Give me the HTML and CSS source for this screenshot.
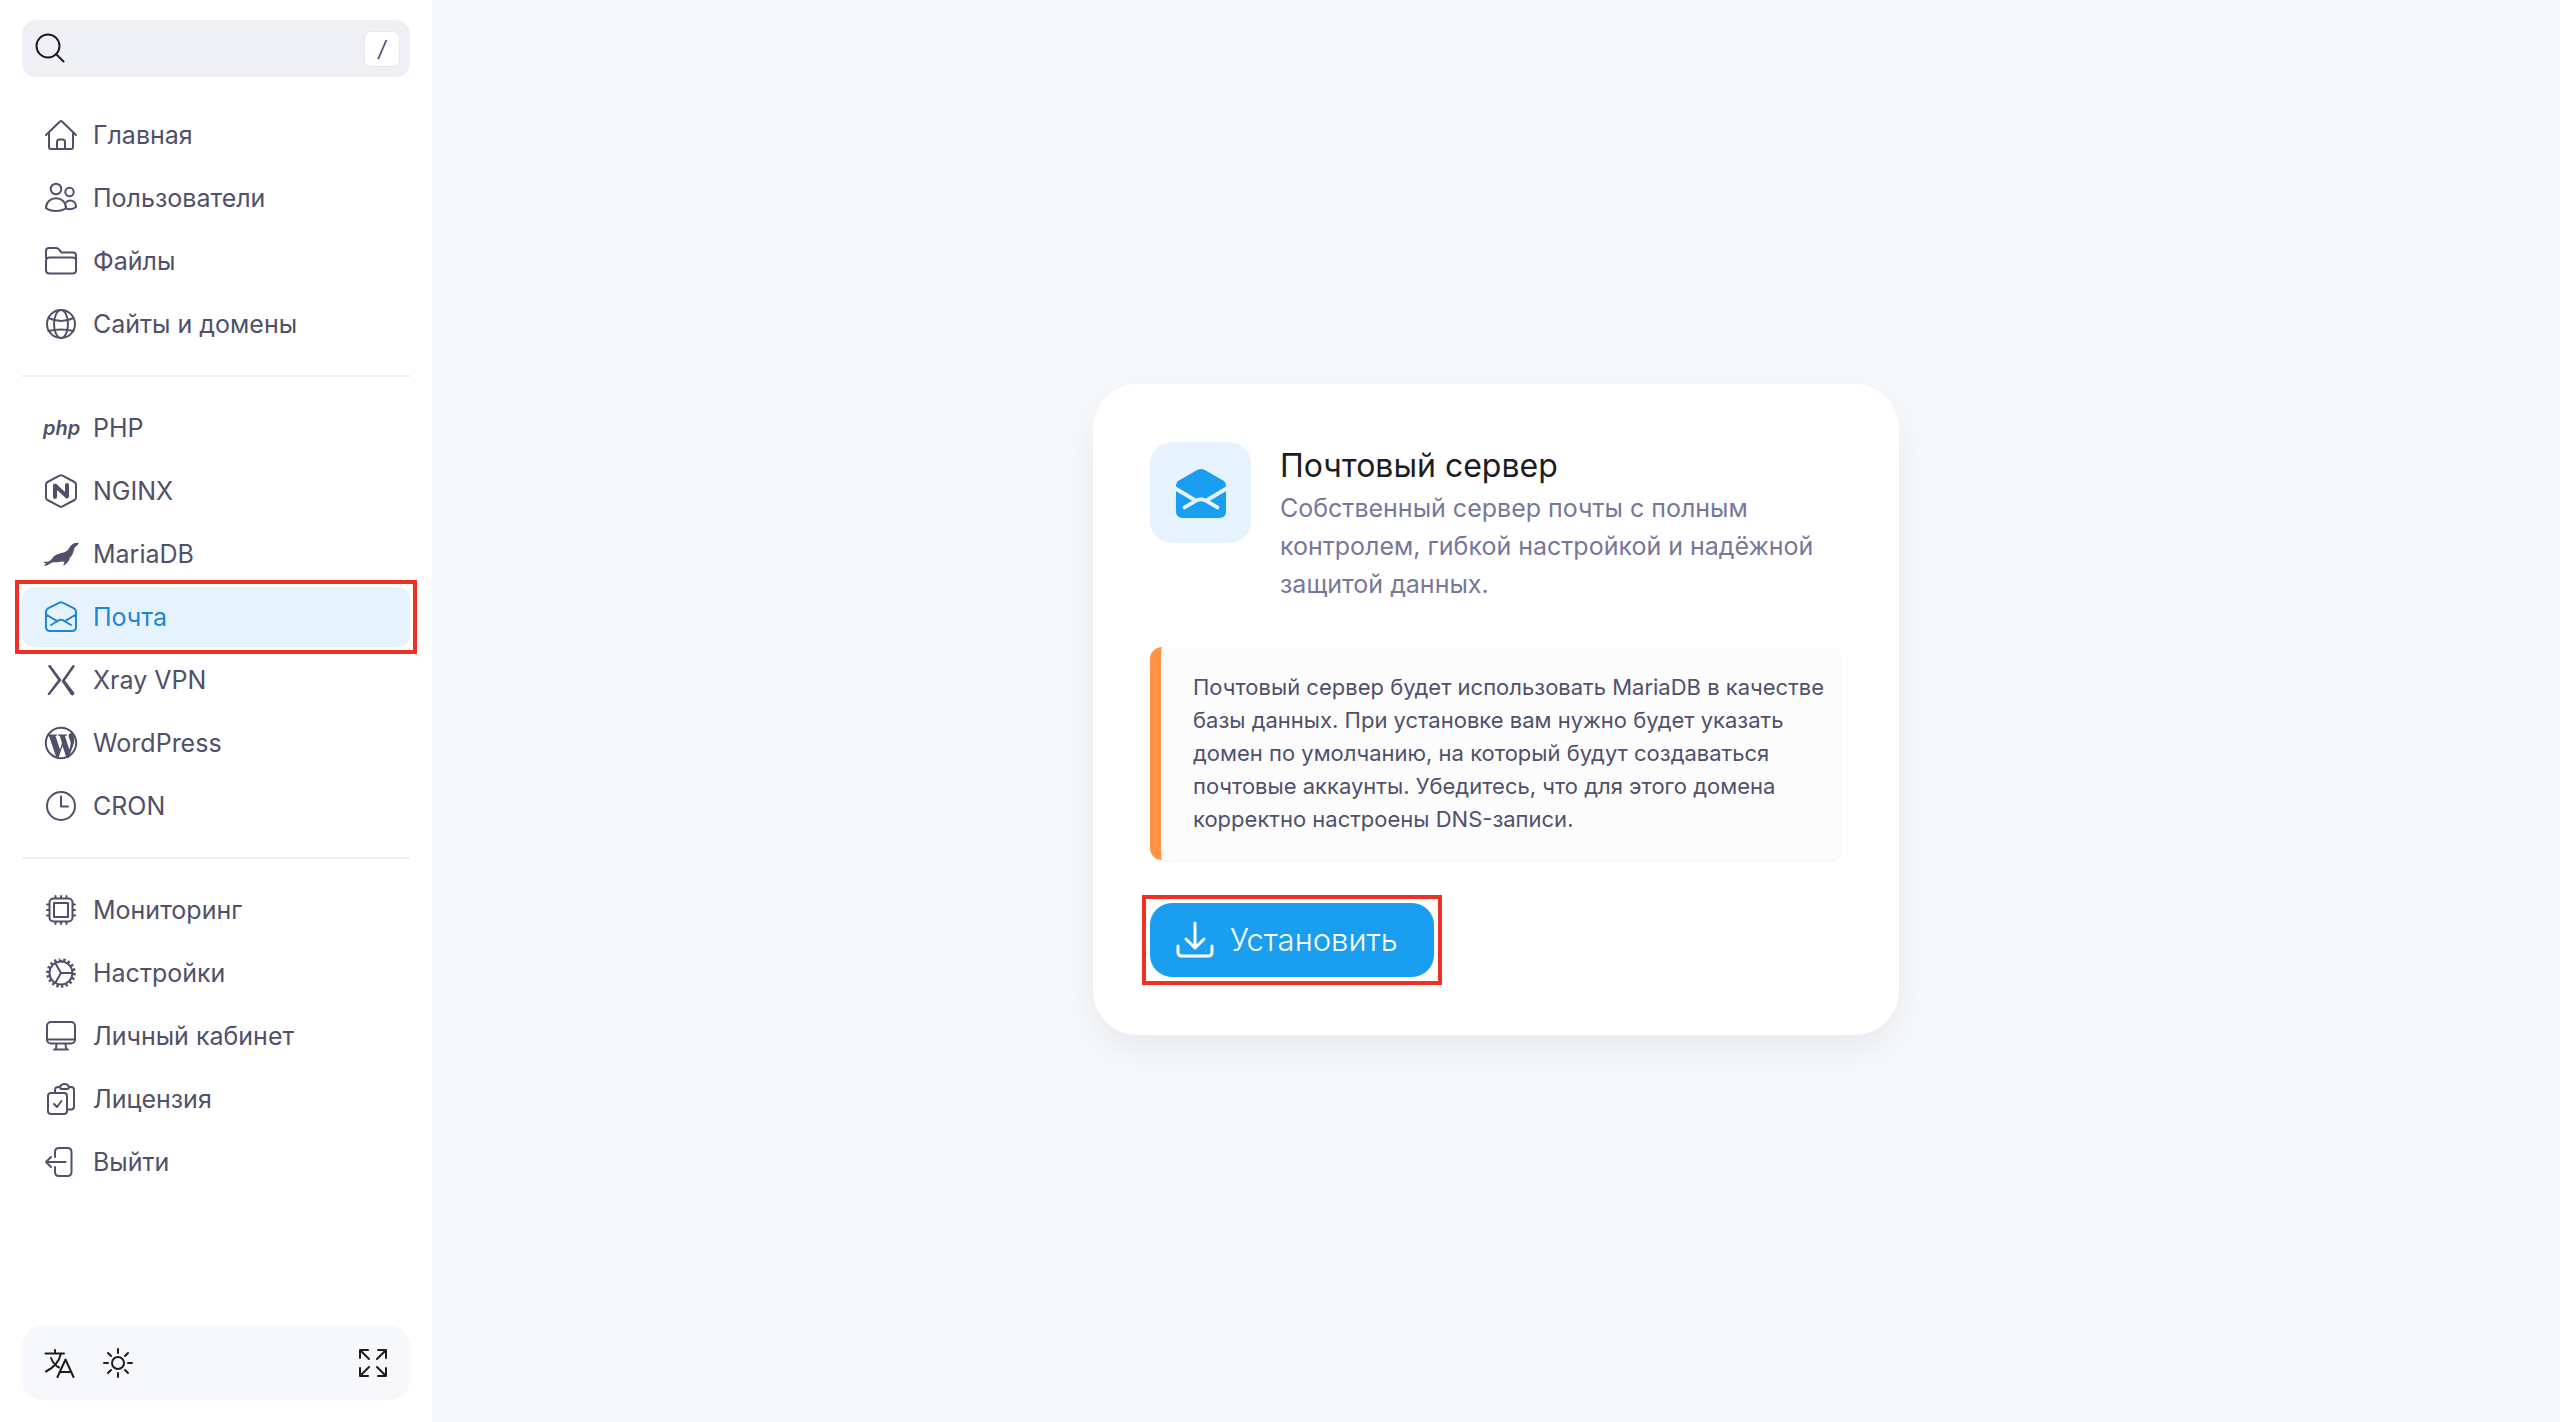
FILE: index.html
```html
<!DOCTYPE html>
<html lang="ru">

    <head>
        <meta charset="utf-8">
        <meta name="viewport" content="width=device-width, initial-scale=1">
        <title>Почтовый сервер</title>
        <link rel="stylesheet" href="styles.css">
    </head>

    <body>

        <aside class="sidebar">

            <label class="search">
                <svg class="search-icon" viewBox="0 0 32 32"><circle cx="14" cy="13" r="11.500"/><path d="M22 21l7.500 7.500"/></svg>
                <input type="search" aria-label="Поиск">
                <kbd>/</kbd>
            </label>

            <nav>
                <ul class="menu">
                    <li><a href="#">
                        <svg viewBox="0 0 36 36"><path d="M3 18L17 4.500Q18 3.500 19 4.500L33 18M6 15.500V30Q6 32 8 32H28Q30 32 30 30V15.500M14 32V25Q14 22.500 16.500 22.500H19.500Q22 22.500 22 25V32"/></svg>
                        Главная</a></li>
                    <li><a href="#">
                        <svg viewBox="0 0 36 36"><circle cx="13" cy="9" r="5.300"/><circle cx="26.500" cy="12" r="4.200"/><path d="M3 28C3 15 23 15 23 28C18 32 8 32 3 28ZM22.500 23C26 18.500 33 20.500 33 27C30 29.500 26 29.500 23 28.500"/></svg>
                        Пользователи</a></li>
                    <li><a href="#">
                        <svg viewBox="0 0 36 36"><path d="M3 15V8Q3 5 6 5H13Q15 5 16 6.500L18.500 9.500H30Q33 9.500 33 12.500V27Q33 30.500 29.500 30.500H6.500Q3 30.500 3 27V18Q3 14.500 6.500 14.500H29.500Q33 14.500 33 17"/></svg>
                        Файлы</a></li>
                    <li><a href="#">
                        <svg viewBox="0 0 36 36"><circle cx="18" cy="18" r="14"/><ellipse cx="18" cy="18" rx="7" ry="14"/><path d="M5.500 12Q18 18 30.500 12M5.500 25Q18 22 30.500 25"/></svg>
                        Сайты и домены</a></li>
                </ul>
                <hr>
                <ul class="menu">
                    <li><a href="#">
                        <span class="php">php</span>
                        PHP</a></li>
                    <li><a href="#">
                        <svg viewBox="0 0 36 36"><path d="M16.500 2.600Q18 1.800 19.500 2.600L31.500 9Q33 9.800 33 11.500V24.500Q33 26.200 31.500 27L19.500 33.400Q18 34.200 16.500 33.400L4.500 27Q3 26.200 3 24.500V11.500Q3 9.800 4.500 9Z"/><path class="thick" d="M12 24V12.500L24 23.500V12"/></svg>
                        NGINX</a></li>
                    <li><a href="#">
                        <svg viewBox="0 0 36 36"><path class="solid" d="M35.800 6.500C33 7.500 31 6.500 28.500 9C26 11.500 25.500 14 23 15.500C19 17.500 13 17 9.500 22C7 25.500 4.500 26.500 .5 25.500C1 27 2.500 27 3 27.500C2.500 28.500 1 29 1.500 30C5 29.500 6.500 27.500 9 26.500C13 26.200 16 26.500 18.500 25.500C19.500 25.500 20.500 26 21.500 25.500C21.500 27.500 20 28 20.500 29.800C23.500 28 26 25.500 27 21.500C30 19 30.500 15 31.500 12C32.500 10 35.500 9.500 35.800 6.500Z"/></svg>
                        MariaDB</a></li>
                    <li class="marked"><a href="#" class="active" aria-current="page">
                        <svg viewBox="0 0 36 36"><path d="M3 13Q3 10.500 5 9.300L16.500 3.700Q18 3 19.500 3.700L31 9.300Q33 10.500 33 13V28Q33 32 29 32H7Q3 32 3 28ZM3 15.500L14.500 22.300M33 15.500L21.500 22.300M8 26L15.500 21.500Q18 20.200 20.500 21.500L28 26"/></svg>
                        Почта</a></li>
                    <li><a href="#">
                        <svg viewBox="0 0 36 36"><path class="solid" d="M5 4Q7 2 8.500 4.500L18.500 18L7 32.500Q5 34 4.500 32L15 18ZM31.500 3.500Q30 2.500 29 4L18.500 19L28 33Q31 34.500 31.500 31L22 18.500L31.500 5Z"/></svg>
                        Xray VPN</a></li>
                    <li><a href="#">
                        <svg viewBox="0 0 36 36"><circle cx="18" cy="18" r="15.200"/><path class="solid" d="M4 9.500H14V10.500L12.500 11L17 24.500L19 18L16.800 11L15 10.500V9.500H24V10.500L22 11L26.300 24.500C28 20 28 17 26.500 14C25 11 25.500 8 28.500 8C32 11 32 16 30 21L25.500 33H23.500L19.500 21L15.500 33H13.500L6 11Z"/></svg>
                        WordPress</a></li>
                    <li><a href="#">
                        <svg viewBox="0 0 36 36"><circle cx="18" cy="18" r="14"/><path d="M18 8.500V18.500H25"/></svg>
                        CRON</a></li>
                </ul>
                <hr>
                <ul class="menu">
                    <li><a href="#">
                        <svg viewBox="0 0 36 36"><rect x="6.500" y="6.500" width="23" height="23" rx="4"/><rect x="11" y="11" width="14" height="14"/><path d="M12.500 6V4M18 6V4M23.500 6V4M12.500 32V30M18 32V30M23.500 32V30M6 12.500H4M6 18H4M6 23.500H4M32 12.500H30M32 18H30M32 23.500H30"/></svg>
                        Мониторинг</a></li>
                    <li><a href="#">
                        <svg viewBox="0 0 36 36"><circle cx="18" cy="18" r="11.500"/><circle class="teeth" cx="18" cy="18" r="13.300" pathLength="72"/><path d="M18 18H29M18 18L12.500 8.500M18 18L12.500 27.500"/></svg>
                        Настройки</a></li>
                    <li><a href="#">
                        <svg viewBox="0 0 36 36"><rect x="4" y="4" width="28" height="21.500" rx="4"/><path d="M4 21.500H32M13.500 26L13 30.500M22.500 26L23 30.500M11 31.500H25"/></svg>
                        Личный кабинет</a></li>
                    <li><a href="#">
                        <svg viewBox="0 0 36 36"><rect x="5" y="12" width="19" height="21" rx="3"/><path d="M12 12V9Q12 6 15 6H17M26 6H28Q31 6 31 9V25.500Q31 28.500 28 28.500H24M11 23L14 26L18.500 20M17 6Q18 3 21.500 3Q25 3 26 6Q26 8 24 8H19Q17 8 17 6Z"/></svg>
                        Лицензия</a></li>
                    <li><a href="#">
                        <svg viewBox="0 0 36 36"><path d="M12 13V8Q12 4 16 4H24.500Q28.500 4 28.500 8V28Q28.500 32 24.500 32H16Q12 32 12 28V23M22.500 18H3M8 13L3 18L8 23"/></svg>
                        Выйти</a></li>
                </ul>
            </nav>

            <div class="tools">
                <button type="button" aria-label="Язык">
                    <svg viewBox="0 0 32 32"><path d="M2.500 6.500H21M12 3V6.500M18 6.500C16 15 10 21 3 24.500M8 11C10 16 13 19 16 20.500M14.500 30L22.500 12.500L30.500 30M17 25H28"/></svg>
                </button>
                <button type="button" aria-label="Тема">
                    <svg viewBox="0 0 32 32"><circle cx="16" cy="16" r="6"/><path d="M16 2V6M16 26V30M2 16H6M26 16H30M6 6L9 9M23 23L26 26M6 26L9 23M23 9L26 6"/></svg>
                </button>
                <button type="button" class="expand" aria-label="Во весь экран">
                    <svg viewBox="0 0 32 32"><path d="M3 11V3H11M3.500 3.500L12 12M21 3H29V11M28.500 3.500L20 12M3 21V29H11M3.500 28.500L12 20M21 29H29V21M28.500 28.500L20 20"/></svg>
                </button>
            </div>

        </aside>

        <main>

            <section class="card">
                <header>
                    <div class="badge">
                        <svg viewBox="0 0 54 54"><path class="fill" d="M1 20Q1 16 4 14L23 3Q27 1 31 3L50 14Q53 16 53 20V46Q53 53 46 53H8Q1 53 1 46Z"/><path class="cut" d="M0 22L20 34M54 22L34 34M10 42L22 35Q27 32 32 35L44 42"/></svg>
                    </div>
                    <div>
                        <h1>Почтовый сервер</h1>
                        <p>Собственный сервер почты с полным контролем, гибкой настройкой и надёжной защитой данных.</p>
                    </div>
                </header>

                <p class="note">Почтовый сервер будет использовать MariaDB в качестве базы данных. При установке вам нужно будет указать домен по умолчанию, на который будут создаваться почтовые аккаунты. Убедитесь, что для этого домена корректно настроены DNS-записи.</p>

                <div class="marked">
                    <button type="button" class="install">
                        <svg viewBox="0 0 36 36"><path d="M18 1V26M9 17L18 26L27 17M1 24V30Q1 34 5 34H31Q35 34 35 30V24"/></svg>
                        Установить
                    </button>
                </div>
            </section>

        </main>

    </body>

</html>
```
FILE: styles.css
```css
* {
    box-sizing: border-box;
}

body {
    margin: 0;
    min-height: 100vh;
    display: flex;
    background: #f7f8fb;
    color: #50506a;
    font: 25px/38px Inter, sans-serif;
}

svg {
    display: block;
    fill: none;
    stroke: currentColor;
    stroke-width: 2;
    stroke-linecap: round;
    stroke-linejoin: round;
}

button {
    border: 0;
    background: none;
    font: inherit;
    cursor: pointer;
}

/* sidebar */

.sidebar {
    width: 432px;
    flex: none;
    display: flex;
    flex-direction: column;
    padding: 20px 22px 22px;
    background: #fff;
}

.search {
    display: flex;
    align-items: center;
    height: 57px;
    margin-bottom: 28px;
    padding: 0 10px 0 12px;
    border-radius: 14px;
    background: #eff0f5;
}
.search-icon {
    width: 32px;
    height: 32px;
    color: #1c1c22;
}
.search input {
    flex: 1;
    min-width: 0;
    border: 0;
    outline: 0;
    background: none;
    font: inherit;
}
.search kbd {
    width: 36px;
    height: 36px;
    border: 1px solid #e6e7ee;
    border-radius: 7px;
    background: #fff;
    font: italic 22px/34px Inter, sans-serif;
    text-align: center;
}

.menu {
    display: flex;
    flex-direction: column;
    gap: 3px;
    margin: 0;
    padding: 0;
    list-style: none;
}
.menu a {
    display: flex;
    align-items: center;
    gap: 14px;
    height: 60px;
    padding: 0 21px;
    border-radius: 12px;
    color: inherit;
    text-decoration: none;
}
.menu svg {
    width: 36px;
    height: 36px;
}
.menu .active {
    background: #e6f3ff;
    color: #1c87d4;
}

.php {
    width: 36px;
    font-size: 20px;
    font-weight: 600;
    font-style: italic;
}

.solid {
    fill: currentColor;
    stroke: none;
}
.thick {
    stroke-width: 4;
}
.teeth {
    stroke-width: 3;
    stroke-linecap: butt;
    stroke-dasharray: 2 2;
}

hr {
    width: 100%;
    height: 2px;
    margin: 21px 0;
    border: 0;
    background: #f0f0f3;
}

.tools {
    display: flex;
    align-items: center;
    gap: 27px;
    height: 74px;
    margin-top: auto;
    padding: 0 21px;
    border-radius: 20px;
    background: #f7f8fb;
    color: #1c1c22;
}
.tools button {
    padding: 0;
    color: inherit;
}
.tools svg {
    width: 32px;
    height: 32px;
}
.tools .expand {
    margin-left: auto;
}

/* red frame drawn round the items to press */
.marked {
    position: relative;
}
.marked::after {
    content: "";
    position: absolute;
    inset: -7px;
    border: 4px solid #ee3124;
    pointer-events: none;
}

/* content */

main {
    flex: 1;
    display: flex;
    align-items: center;
    justify-content: center;
    padding-bottom: 3px;
}

.card {
    width: 806px;
    padding: 58px 57px;
    border-radius: 44px;
    background: #fff;
    box-shadow: 0 14px 28px rgba(80, 80, 110, .08);
}
.card header {
    display: flex;
    gap: 29px;
    margin-bottom: 44px;
}

.badge {
    width: 101px;
    height: 101px;
    flex: none;
    display: grid;
    place-items: center;
    border-radius: 22px;
    background: #e6f3ff;
}
.badge svg {
    width: 52px;
    height: 52px;
}
.fill {
    fill: #1a9ef0;
    stroke: none;
}
.cut {
    stroke: #e6f3ff;
    stroke-width: 4;
}

h1 {
    margin: 1px 0 0;
    color: #1c1c22;
    font-size: 32px;
    font-weight: 400;
    line-height: 46px;
}
header p {
    margin: 0;
    color: #77779a;
}

.note {
    margin: 0 0 43px;
    padding: 24px 12px 24px 32px;
    border-left: 11px solid #ff9447;
    border-radius: 12px;
    background: #fcfcfd;
    box-shadow: 0 2px 2px rgba(80, 80, 110, .06);
    font-size: 22px;
    line-height: 33px;
}

.card .marked {
    width: fit-content;
}
.card .marked::after {
    inset: -8px;
}
.install {
    display: flex;
    align-items: center;
    gap: 17px;
    height: 74px;
    padding: 0 36px 0 27px;
    border-radius: 22px;
    background: #1a9ef0;
    color: #fff;
    font-size: 31px;
    font-weight: 300;
}
.install svg {
    width: 36px;
    height: 36px;
    stroke-width: 3;
    overflow: visible;
}
```
